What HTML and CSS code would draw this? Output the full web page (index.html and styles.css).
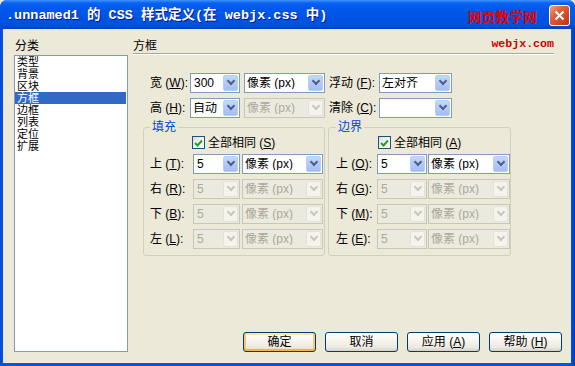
FILE: index.html
```html
<!DOCTYPE html>
<html lang="zh-CN">

<head>
  <meta charset="UTF-8" />
  <title>.unnamed1 的 CSS 样式定义</title>
  <link rel="stylesheet" href="styles.css">
</head>

<body>
  <div class="window">
    <div class="titlebar">
      <span class="title">.unnamed1 的 CSS 样式定义(在 webjx.css 中)</span>
      <span class="brand">网页教学网</span>
      <span class="close">
        <svg width="11" height="11" viewBox="0 0 11 11"><path d="M1.5 1.5 L9.5 9.5 M9.5 1.5 L1.5 9.5" stroke="#fff" stroke-width="2" fill="none" /></svg>
      </span>
    </div>

    <div class="client">
      <div class="cats">
        <div class="caption">分类</div>
        <ul class="list">
          <li>类型</li>
          <li>背景</li>
          <li>区块</li>
          <li class="selected">方框</li>
          <li>边框</li>
          <li>列表</li>
          <li>定位</li>
          <li>扩展</li>
        </ul>
      </div>

      <div class="panel">
        <div class="panel-head">
          <span>方框</span>
          <span class="site">webjx.com</span>
        </div>

        <div class="top-grid">
          <span class="lbl">宽 (<u>W</u>):</span>
          <div class="select w50"><span class="val num">300</span><span class="drop"></span></div>
          <div class="select w81"><span class="val">像素 (px)</span><span class="drop"></span></div>
          <span class="lbl">浮动 (<u>F</u>):</span>
          <div class="select w73"><span class="val">左对齐</span><span class="drop"></span></div>

          <span class="lbl">高 (<u>H</u>):</span>
          <div class="select w50"><span class="val">自动</span><span class="drop"></span></div>
          <div class="select w81 disabled"><span class="val">像素 (px)</span><span class="drop"></span></div>
          <span class="lbl">清除 (<u>C</u>):</span>
          <div class="select w73"><span class="val"></span><span class="drop"></span></div>
        </div>

        <div class="groups">
          <fieldset class="group padding">
            <legend>填充</legend>
            <label class="same"><span class="check"><svg width="9" height="8" viewBox="0 0 9 8"><path d="M1 4 L3.5 6.5 L8 1.5" stroke="#21A121" stroke-width="2" fill="none" /></svg></span>全部相同 (<u>S</u>)</label>
            <div class="rows">
              <span class="lbl">上 (<u>T</u>):</span>
              <div class="select small"><span class="val num">5</span><span class="drop"></span></div>
              <div class="select unit"><span class="val">像素 (px)</span><span class="drop"></span></div>

              <span class="lbl">右 (<u>R</u>):</span>
              <div class="select small disabled"><span class="val num">5</span><span class="drop"></span></div>
              <div class="select unit disabled"><span class="val">像素 (px)</span><span class="drop"></span></div>

              <span class="lbl">下 (<u>B</u>):</span>
              <div class="select small disabled"><span class="val num">5</span><span class="drop"></span></div>
              <div class="select unit disabled"><span class="val">像素 (px)</span><span class="drop"></span></div>

              <span class="lbl">左 (<u>L</u>):</span>
              <div class="select small disabled"><span class="val num">5</span><span class="drop"></span></div>
              <div class="select unit disabled"><span class="val">像素 (px)</span><span class="drop"></span></div>
            </div>
          </fieldset>

          <fieldset class="group margin">
            <legend>边界</legend>
            <label class="same"><span class="check"><svg width="9" height="8" viewBox="0 0 9 8"><path d="M1 4 L3.5 6.5 L8 1.5" stroke="#21A121" stroke-width="2" fill="none" /></svg></span>全部相同 (<u>A</u>)</label>
            <div class="rows">
              <span class="lbl">上 (<u>O</u>):</span>
              <div class="select small"><span class="val num">5</span><span class="drop"></span></div>
              <div class="select unit"><span class="val">像素 (px)</span><span class="drop"></span></div>

              <span class="lbl">右 (<u>G</u>):</span>
              <div class="select small disabled"><span class="val num">5</span><span class="drop"></span></div>
              <div class="select unit disabled"><span class="val">像素 (px)</span><span class="drop"></span></div>

              <span class="lbl">下 (<u>M</u>):</span>
              <div class="select small disabled"><span class="val num">5</span><span class="drop"></span></div>
              <div class="select unit disabled"><span class="val">像素 (px)</span><span class="drop"></span></div>

              <span class="lbl">左 (<u>E</u>):</span>
              <div class="select small disabled"><span class="val num">5</span><span class="drop"></span></div>
              <div class="select unit disabled"><span class="val">像素 (px)</span><span class="drop"></span></div>
            </div>
          </fieldset>
        </div>

        <div class="buttons">
          <button class="btn default">确定</button>
          <button class="btn">取消</button>
          <button class="btn">应用 (<u>A</u>)</button>
          <button class="btn">帮助 (<u>H</u>)</button>
        </div>
      </div>
    </div>
  </div>
</body>

</html>
```

FILE: styles.css
```css
* {
  box-sizing: border-box;
}

body {
  margin: 0;
  background-color: #ece9d8;
  font-family: "Liberation Sans", "Noto Sans CJK SC", sans-serif;
  font-size: 12px;
  line-height: 12px;
  color: #000;
}

u {
  text-decoration: underline;
  text-underline-offset: 1px;
}

/* window frame */
.window {
  width: 575px;
  height: 366px;
  display: flex;
  flex-direction: column;
  background: linear-gradient(90deg, #0843d6 0, #0055e5 2px, #0055e5 571px, #0035c0 575px);
  border-radius: 7px 7px 0 0;
  overflow: hidden;
}

.titlebar {
  height: 29px;
  display: flex;
  align-items: center;
  padding: 2px 5px 0 6px;
  background: linear-gradient(180deg, #3d95ff 0, #0a62f0 3px, #0058ee 8px, #0054e3 18px, #0050dd 25px, #003dc4 29px);
}

.title {
  font-family: "Liberation Mono", "Noto Sans CJK SC", monospace;
  font-weight: 700;
  font-size: 13.5px;
  color: #fff;
  text-shadow: 1px 1px #0a1883;
  white-space: nowrap;
}

.brand {
  margin-left: auto;
  font-family: "Noto Sans CJK SC", sans-serif;
  font-weight: 700;
  font-size: 13.8px;
  color: #e60000;
}

.close {
  width: 21px;
  height: 21px;
  margin-left: 12px;
  margin-top: -1px;
  border: 1px solid #fff;
  border-radius: 3px;
  background: linear-gradient(135deg, #f0a488 0, #e2623e 35%, #cd4320 75%, #b33210 100%);
  display: flex;
  align-items: center;
  justify-content: center;
}

.client {
  flex: 1;
  margin: 0 4px 3px 3px;
  background-color: #ece9d8;
  display: flex;
  padding: 11px 9px 11px 11px;
}

/* category list */
.cats {
  width: 114px;
  display: flex;
  flex-direction: column;
}

.caption {
  padding-left: 1px;
  height: 12px;
  margin-bottom: 3px;
}

.list {
  list-style: none;
  margin: 0;
  padding: 0;
  flex: 1;
  background: #fff;
  border: 1px solid #7f9db9;
}

.list li {
  height: 12px;
  padding-left: 2px;
  margin-right: 1px;
  font-size: 11px;
  line-height: 12px;
}

.list li.selected {
  background: #316ac5;
  color: #fff;
}

/* right panel */
.panel {
  flex: 1;
  margin-left: 5px;
  display: flex;
  flex-direction: column;
}

.panel-head {
  display: flex;
  justify-content: space-between;
  align-items: center;
  height: 14px;
  padding-bottom: 1px;
  margin-right: 8px;
  border-bottom: 1px solid #aca899;
  box-shadow: 0 1px 0 #fff;
}

.site {
  font-family: "Liberation Mono", monospace;
  font-weight: 700;
  font-size: 11.6px;
  color: #d00000;
  margin-top: -5px;
}

.top-grid {
  display: grid;
  grid-template-columns: 40px 54px 85px 50px 73px;
  grid-auto-rows: 20px;
  row-gap: 5px;
  align-items: center;
  margin: 19px 0 0 17px;
}

.lbl {
  white-space: nowrap;
}

/* combo box */
.select {
  height: 20px;
  display: flex;
  align-items: center;
  background: #fff;
  border: 1px solid #7f9db9;
}

.select .val {
  flex: 1;
  padding-left: 2px;
  white-space: nowrap;
  overflow: hidden;
}

.select .num {
  font-family: "Liberation Sans", sans-serif;
  padding-left: 3px;
}

.select .drop {
  width: 15px;
  height: 16px;
  margin: 0 1px 0 0;
  align-self: flex-start;
  margin-top: 1px;
  border-radius: 2px;
  background: linear-gradient(180deg, #c6d6fc 0, #b4c9f7 50%, #a4bdf4 100%);
  border: 1px solid #bccdf3;
  display: flex;
  align-items: center;
  justify-content: center;
}

.select .drop::after {
  content: "";
  width: 4px;
  height: 4px;
  border-right: 2px solid #4d6185;
  border-bottom: 2px solid #4d6185;
  transform: translateY(-2px) rotate(45deg);
}

.select.disabled {
  background: #ebeadf;
  border-color: #c9c7ba;
  color: #aca899;
}

.select.disabled .drop {
  background: #f4f3ee;
  border-color: #e4e2d6;
}

.select.disabled .drop::after {
  border-color: #c9c7ba;
}

.w50 { width: 50px; }
.w81 { width: 81px; }
.w73 { width: 73px; }

/* group boxes */
.groups {
  display: flex;
  gap: 3px;
  margin: 3px 0 0 10px;
}

.group {
  margin: 0;
  border: 1px solid #d0d0bf;
  border-radius: 3px;
  padding: 3px 0 6px 6px;
}

.group.padding {
  width: 182px;
}

.group.margin {
  width: 183px;
  padding-left: 7px;
}

.group legend {
  padding: 0 2px;
  color: #0046d5;
  line-height: 12px;
}

.same {
  display: flex;
  align-items: center;
  height: 13px;
  margin-left: 42px;
  white-space: nowrap;
}

.check {
  width: 13px;
  height: 13px;
  margin-right: 3px;
  border: 1px solid #1c5180;
  background: linear-gradient(135deg, #dcdcd7 0, #fff 80%);
  display: flex;
  align-items: center;
  justify-content: center;
}

.rows {
  display: grid;
  grid-auto-rows: 20px;
  row-gap: 5px;
  align-items: center;
  margin-top: 5px;
}

.padding .rows {
  grid-template-columns: 41px 47px 81px;
  column-gap: 2px;
}

.margin .rows {
  grid-template-columns: 40px 50px 82px;
  column-gap: 1px;
}

/* dialog buttons */
.buttons {
  margin-top: auto;
  display: flex;
  justify-content: flex-end;
  gap: 9px;
}

.btn {
  width: 73px;
  height: 20px;
  padding: 0;
  font: inherit;
  color: #000;
  border: 1px solid #003c74;
  border-radius: 3px;
  background: linear-gradient(180deg, #fff 0, #f6f5f0 40%, #ece9e0 80%, #d6d0c5 100%);
}

.btn.default {
  box-shadow: inset 0 -2px 0 #f8b33f, inset 2px 0 0 #fbc96b, inset -2px 0 0 #fbc96b, inset 0 2px 0 #ffe7b0;
}
```
